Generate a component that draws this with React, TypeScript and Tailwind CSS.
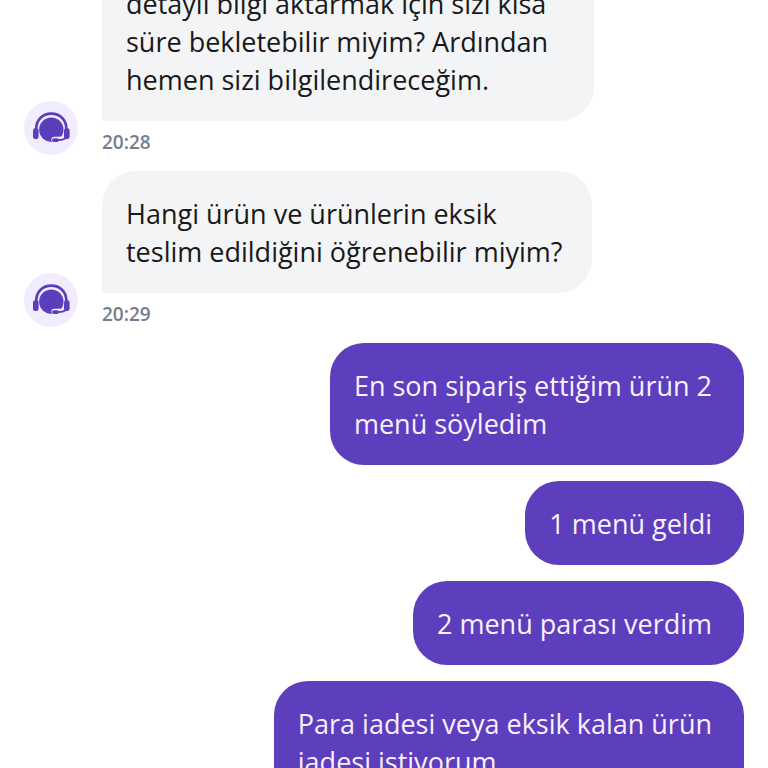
import React from 'react';

type Message = {
  id: number;
  from: 'agent' | 'me';
  text: string;
  time?: string;
  wide?: boolean;
};

const messages: Message[] = [
  {
    id: 1,
    from: 'agent',
    text: 'detaylı bilgi aktarmak için sizi kısa\nsüre bekletebilir miyim? Ardından\nhemen sizi bilgilendireceğim.',
    time: '20:28',
    wide: true,
  },
  {
    id: 2,
    from: 'agent',
    text: 'Hangi ürün ve ürünlerin eksik\nteslim edildiğini öğrenebilir miyim?',
    time: '20:29',
  },
  { id: 3, from: 'me', text: 'En son sipariş ettiğim ürün 2\nmenü söyledim' },
  { id: 4, from: 'me', text: '1 menü geldi' },
  { id: 5, from: 'me', text: '2 menü parası verdim' },
  { id: 6, from: 'me', text: 'Para iadesi veya eksik kalan ürün\niadesi istiyorum' },
];

function AgentAvatar() {
  return (
    <div className="w-[54px] h-[54px] shrink-0 rounded-full bg-[#f1edfe]">
      <svg viewBox="0 0 54 54" fill="none" aria-hidden="true">
        {/* Head */}
        <circle cx="27.3" cy="28.7" r="12.2" fill="#5c3ebc" />
        {/* Headband */}
        <path d="M12.3 28.5v-1.2C12.3 18.6 18.9 12.6 27.3 12.6s15 6 15 14.7v1.2" stroke="#5c3ebc" strokeWidth="2.7" />
        {/* Microphone */}
        <path d="M42.3 36.6c-2 1.6-4.6 2.2-8 2.2h-4" stroke="#f1edfe" strokeWidth="6" strokeLinecap="round" />
        <path d="M42.6 36.3c-2 1.9-4.8 2.6-8.3 2.7h-2" stroke="#5c3ebc" strokeWidth="1.8" />
        <rect x="28" y="37.2" width="7" height="3.8" rx="1.9" fill="#5c3ebc" />
        {/* Ear pads */}
        <rect x="9" y="27.2" width="5.6" height="10.8" rx="2.2" fill="#5c3ebc" />
        <rect x="40" y="27.2" width="5.6" height="10.8" rx="2.2" fill="#5c3ebc" />
      </svg>
    </div>
  );
}

function AgentMessage({ message }: { message: Message }) {
  return (
    <div className="flex items-end gap-6">
      <AgentAvatar />
      <div className="flex flex-col items-start">
        <p
          className={`whitespace-pre-line rounded-[34px] rounded-bl-none bg-[#f3f4f6] pl-6 pt-6 pb-[22px] text-[#191919] ${
            message.wide ? 'pr-[46px]' : 'pr-[30px]'
          }`}
        >
          {message.text}
        </p>
        <time className="mt-2 text-[19px] leading-[26px] font-semibold text-[#757c8b]">{message.time}</time>
      </div>
    </div>
  );
}

function MyMessage({ message }: { message: Message }) {
  return (
    <p className="self-end whitespace-pre-line rounded-[34px] bg-[#5d3ebc] pl-6 pr-8 pt-6 pb-[22px] text-[#f9f0ff]">
      {message.text}
    </p>
  );
}

export default function App() {
  return (
    <main className="h-screen overflow-hidden bg-white px-6 font-['Open_Sans','Noto_Sans',sans-serif] text-[27px] leading-[38px]">
      {/* The oldest message is partly scrolled out of view */}
      <div className="-mt-[39px] flex flex-col gap-4">
        {messages.map(message =>
          message.from === 'agent' ? (
            <AgentMessage key={message.id} message={message} />
          ) : (
            <MyMessage key={message.id} message={message} />
          )
        )}
      </div>
    </main>
  );
}
